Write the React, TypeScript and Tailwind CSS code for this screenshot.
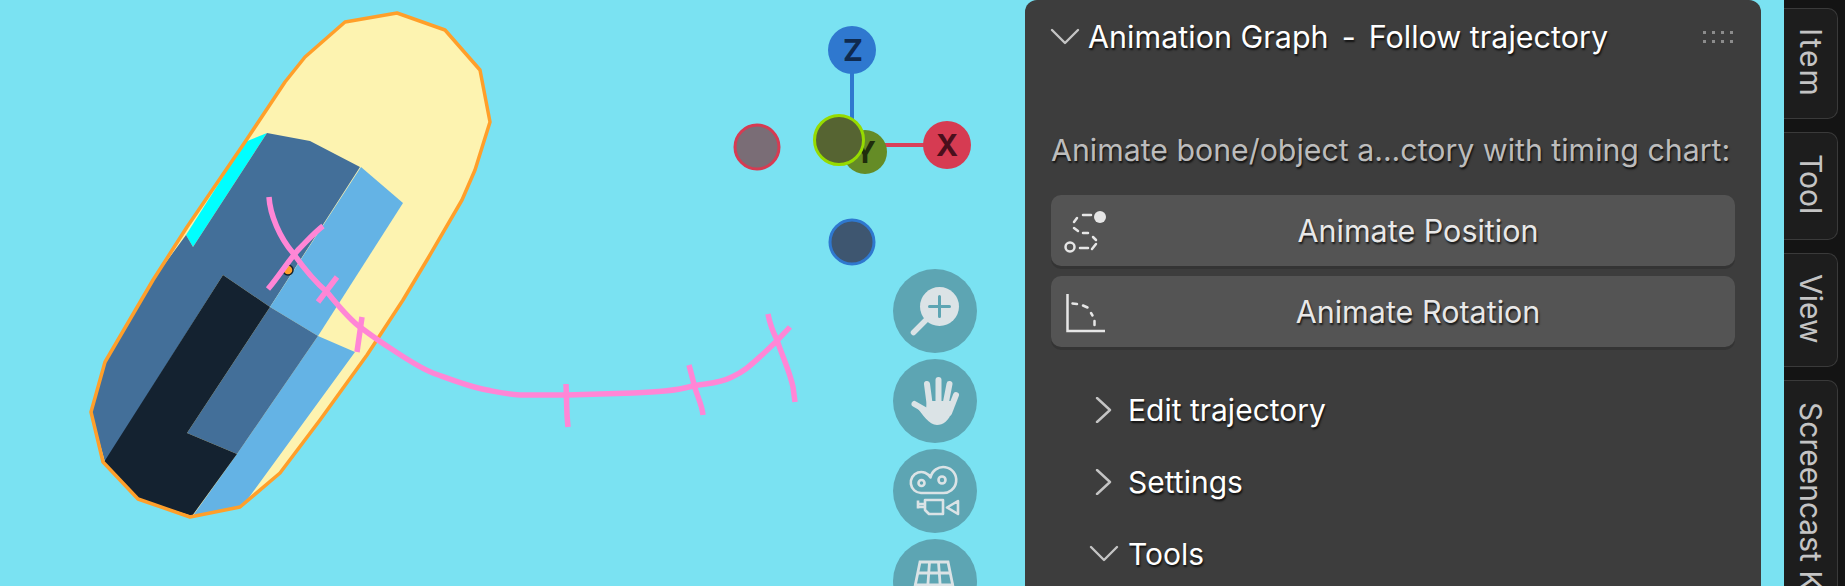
import { ReactNode } from "react";

const font = "font-['Inter','Liberation_Sans',sans-serif]";
const shadow = "[text-shadow:1px_2px_2px_rgba(0,0,0,0.75)]";

const Chevron = ({ open }: { open?: boolean }) => (
  <svg width="30" height="26" viewBox="0 0 30 26" fill="none" stroke="#c4c4c4" strokeWidth="2.4" strokeLinecap="round" strokeLinejoin="round">
    {open ? <path d="M2 6 L15 19 L28 6" /> : <path d="M8 1 L21 13 L8 25" />}
  </svg>
);

const Viewport = () => (
  <svg width="1025" height="586" viewBox="0 0 1025 586" className="block">
    {/* body */}
    <path
      d="M345 22 L397 13 L445 30 L480 70 L490 122 L475 170 L462 200 L427 260 L403 300 L367 355 L320 420 L280 473 L240 507 L190 517 L138 499 L103 462 L91 412 L105 362 L153 280 L187 227 L245 142 L285 82 L305 57 Z"
      fill="#fdf3b0"
    />
    <path d="M245 142 L267 133 L193 247 L186 235 Z" fill="#00ffff" />
    <path
      d="M267 133 L310 141 L360 167 L270 307 L223 275 L105 462 L91 412 L105 362 L153 280 L186 235 L193 247 Z"
      fill="#436f99"
    />
    <path d="M361 167 L403 203 L318 336 L270 307 Z" fill="#64b3e5" />
    <path d="M318 336 L355 352 L242 507 L192 517 L237 454 Z" fill="#64b3e5" />
    <path d="M270 307 L318 336 L237 454 L187 433 Z" fill="#436f99" />
    <path d="M223 275 L270 307 L187 433 L237 454 L192 516 L138 499 L104 462 Z" fill="#142230" />
    <path
      d="M345 22 L397 13 L445 30 L480 70 L490 122 L475 170 L462 200 L427 260 L403 300 L367 355 L320 420 L280 473 L240 507 L190 517 L138 499 L103 462 L91 412 L105 362 L153 280 L187 227 L245 142 L285 82 L305 57 Z"
      fill="none"
      stroke="#ff9f2a"
      strokeWidth="3.5"
      strokeLinejoin="round"
    />

    {/* origin dot */}
    <circle cx="288" cy="270" r="5" fill="#ff9f2a" stroke="#142230" strokeWidth="1.5" />

    {/* trajectory */}
    <g fill="none" stroke="#ff86d6" strokeWidth="5.5">
      <path d="M269 197 C270 215 280 238 293 253 C305 270 315 282 327 292 C338 305 348 318 360 327 C372 336 382 343 393 350 C405 358 420 368 433 373 C450 379 470 387 487 390 C497 392 505 394 520 395 L567 395 L633 393 C655 392 675 391 693 386 C708 383 718 384 732 377 C745 371 752 364 762 355 C772 346 782 336 790 327" />
      <path d="M268 289 C280 275 290 258 300 248 C308 240 315 232 323 226" />
      <path d="M337 277 L318 302" />
      <path d="M362 317 L357 352" />
      <path d="M566 384 L567 415 L568 427" />
      <path d="M689 365 L695 388 C698 398 702 405 703 415" />
      <path d="M768 314 C770 325 773 332 777 340 C783 358 790 372 793 387 L795 402" />
    </g>

    {/* gizmo */}
    <line x1="852" y1="70" x2="852" y2="125" stroke="#2f78cf" strokeWidth="4" />
    <line x1="860" y1="145" x2="930" y2="145" stroke="#d9405a" strokeWidth="4" />
    <circle cx="852" cy="50" r="24" fill="#2f78cf" />
    <circle cx="947" cy="145" r="24" fill="#d63b52" />
    <circle cx="757" cy="147" r="22" fill="#7a6d76" stroke="#d63b52" strokeWidth="3" />
    <circle cx="852" cy="242" r="22" fill="#3e5670" stroke="#2f78cf" strokeWidth="3" />
    <circle cx="865" cy="152" r="22" fill="#658c26" />
    <text x="853" y="61" textAnchor="middle" fontFamily="Inter, sans-serif" fontWeight="700" fontSize="30" fill="#0f2a4f">Z</text>
    <text x="947" y="156" textAnchor="middle" fontFamily="Inter, sans-serif" fontWeight="700" fontSize="30" fill="#4a0f1c">X</text>
    <text x="865" y="163" textAnchor="middle" fontFamily="Inter, sans-serif" fontWeight="700" fontSize="30" fill="#1f2d0c">Y</text>
    <circle cx="839" cy="140" r="24.5" fill="#566432" stroke="#96db00" strokeWidth="3" />
  </svg>
);

const NavButton = ({ children }: { children: ReactNode }) => (
  <div className="w-[84px] h-[84px] rounded-full bg-[#5da5b3] shrink-0">
    <svg width="84" height="84" viewBox="0 0 84 84">
      {children}
    </svg>
  </div>
);

const NavGizmos = () => (
  <div className="absolute left-[893px] top-[269px] flex flex-col gap-[6px]">
    <NavButton>
      <circle cx="46.5" cy="37.5" r="19.5" fill="#dbe3e6" />
      <path d="M36.5 37.5 H56.5 M46.5 27.5 V47.5" stroke="#5da5b3" strokeWidth="3" strokeLinecap="round" />
      <path d="M33 51 L20.5 63.5" stroke="#dbe3e6" strokeWidth="5.5" strokeLinecap="round" />
    </NavButton>
    <NavButton>
      <g stroke="#dbe3e6" strokeWidth="6" strokeLinecap="round" fill="none">
        <path d="M34 25 L37 48" />
        <path d="M45.5 21 V48" />
        <path d="M56.5 25 L52 48" />
        <path d="M63 36 L56 54" />
        <path d="M21.5 45 L32 51" />
      </g>
      <path d="M22 46 L33 50 L34 42 H58 L59 52 C56 62 50 66 44 66 C36 66 30 56 22 46 Z" fill="#dbe3e6" />
    </NavButton>
    <NavButton>
      <g stroke="#dbe3e6" strokeWidth="2.6" fill="none" strokeLinejoin="round">
        <path d="M28 44 A10.5 10.5 0 1 1 37.5 28.5 A13 13 0 1 1 49 44 Z" />
        <circle cx="28.5" cy="34" r="3" />
        <circle cx="49" cy="31" r="3.5" />
        <path d="M32 51 H50 V65 H36 L32 61 Z" />
        <path d="M32 55 H25 M25 51.5 V59.5 M25 58 H32" />
        <path d="M65 52 L54 58.5 L65 65 Z" />
      </g>
    </NavButton>
    <NavButton>
      <g stroke="#dbe3e6" strokeWidth="2.8" fill="none">
        <path d="M27 23 H55 L65 72 H17 Z" />
        <path d="M24.5 34 H57.5 M21.5 46 H60.5" />
        <path d="M36.5 23 L33 72 M45.5 23 L49 72" />
      </g>
    </NavButton>
  </div>
);

const AnimPositionIcon = () => (
  <svg width="62" height="70" viewBox="0 0 62 70" fill="none" stroke="#e6e6e6" strokeWidth="2.5" strokeLinecap="round">
    <circle cx="49" cy="21" r="6" fill="#e6e6e6" stroke="none" />
    <circle cx="19" cy="51" r="4.5" />
    <path d="M32 19 H40 M26 22 L23 26 M23 32 L27 35 M32 37 H37 M42 41 L45 44 M45 48 L41 53 M37 52 H29" />
  </svg>
);

const AnimRotationIcon = () => (
  <svg width="62" height="70" viewBox="0 0 62 70" fill="none" stroke="#e6e6e6" strokeWidth="2.5">
    <path d="M16.5 17 V54 H54" />
    <path d="M21.5 26.5 L26 27 M32 28.5 L36.5 30.5 M40 36 L41.5 38.5 M43.5 44 V48" strokeLinecap="round" />
  </svg>
);

const ActionButton = ({ icon, label }: { icon: ReactNode; label: string }) => (
  <div className="h-[71px] rounded-[10px] bg-[#545454] shadow-[0_3px_0_#343434] flex items-center">
    <div className="w-[50px] shrink-0 overflow-visible">{icon}</div>
    <span className={`flex-1 text-center text-[30.5px] leading-[40px] text-[#e8e8e8] ${shadow}`}>{label}</span>
  </div>
);

const SubPanel = ({ label, open }: { label: string; open?: boolean }) => (
  <div className="h-[72px] flex items-center">
    <div className="w-[30px] flex justify-center">
      <Chevron open={open} />
    </div>
    <span className={`ml-[9px] text-[30px] leading-[40px] text-white ${shadow}`}>{label}</span>
  </div>
);

const SidePanel = () => (
  <div className={`w-[736px] shrink-0 h-[700px] bg-[#3d3d3d] rounded-t-[12px] ${font}`}>
    <div className="h-[74px] flex items-center pl-[25px] pr-[28px]">
      <Chevron open />
      <span className={`ml-[8px] text-[30.5px] leading-[40px] text-white whitespace-nowrap ${shadow}`}>Animation Graph</span>
      <span className={`ml-[13px] text-[30.5px] leading-[40px] text-white ${shadow}`}>-</span>
      <span className={`ml-[13px] text-[30.5px] leading-[40px] text-white whitespace-nowrap ${shadow}`}>Follow trajectory</span>
      <div className="ml-auto grid grid-cols-4 gap-x-[6px] gap-y-[6px]">
        {Array.from({ length: 8 }).map((_, i) => (
          <span key={i} className="w-[3px] h-[3px] bg-[#8c8c8c]" />
        ))}
      </div>
    </div>
    <div className="pl-[26px] pr-[26px] pt-[56px]">
      <p className={`h-[65px] text-[30.3px] leading-[40px] text-[#bcbcbc] whitespace-nowrap ${shadow}`}>
        Animate bone/object a...ctory with timing chart:
      </p>
      <div className="flex flex-col gap-[10px]">
        <ActionButton icon={<AnimPositionIcon />} label="Animate Position" />
        <ActionButton icon={<AnimRotationIcon />} label="Animate Rotation" />
      </div>
      <div className="mt-[27px] pl-[38px]">
        <SubPanel label="Edit trajectory" />
        <SubPanel label="Settings" />
        <SubPanel label="Tools" open />
      </div>
    </div>
  </div>
);

const tabs = [
  { label: "Item", box: "h-[111px] pt-[19px]", text: "tracking-[2px]" },
  { label: "Tool", box: "h-[108px] pt-[21px]", text: "" },
  { label: "View", box: "h-[114px] pt-[20px]", text: "" },
  { label: "Screencast Keys", box: "h-[300px] pt-[21px]", text: "" },
];

const TabStrip = () => (
  <div className={`w-[61px] shrink-0 h-full bg-[#141414] pt-[8px] flex flex-col gap-[13px] overflow-hidden ${font}`}>
    {tabs.map((tab) => (
      <div
        key={tab.label}
        className={`${tab.box} shrink-0 w-[54px] bg-[#1d1d1d] border border-l-0 border-[#3a3a3a] rounded-r-[10px] flex justify-center`}
      >
        <span className={`[writing-mode:vertical-rl] text-[30px] leading-[34px] text-[#c4c4c4] whitespace-nowrap ${tab.text}`}>
          {tab.label}
        </span>
      </div>
    ))}
  </div>
);

export default function App() {
  return (
    <div className="w-[1845px] h-[586px] overflow-hidden flex bg-[#7ae2f2]">
      <div className="relative w-[1025px] shrink-0">
        <Viewport />
        <NavGizmos />
      </div>
      <SidePanel />
      <div className="w-[23px] shrink-0" />
      <TabStrip />
    </div>
  );
}
